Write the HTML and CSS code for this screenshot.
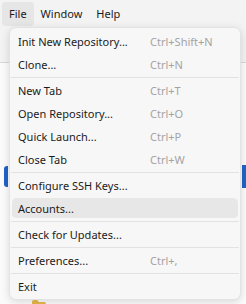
FILE: index.html
```html
<!DOCTYPE html>
<html>
<head>
<meta charset="utf-8">
<link rel="stylesheet" href="styles.css">
</head>
<body>
<div class="app">
  <div class="menubar">
    <span class="mb-item active">File</span>
    <span class="mb-item">Window</span>
    <span class="mb-item">Help</span>
  </div>
  <div class="toolbar"></div>
  <div class="content">
    <div class="sel-left"></div>
    <div class="sel-right"></div>
    <svg class="folder" width="14" height="10" viewBox="0 0 14 10"><path d="M0 2 Q0 0 2 0 H5 L7 2 H12 Q14 2 14 4 V10 H0 Z" fill="#e8b84a"/></svg>
  </div>
  <div class="menu">
    <div class="item"><span class="label">Init New Repository...</span><span class="key">Ctrl+Shift+N</span></div>
    <div class="item"><span class="label">Clone...</span><span class="key">Ctrl+N</span></div>
    <div class="sep"></div>
    <div class="item"><span class="label">New Tab</span><span class="key">Ctrl+T</span></div>
    <div class="item"><span class="label">Open Repository...</span><span class="key">Ctrl+O</span></div>
    <div class="item"><span class="label">Quick Launch...</span><span class="key">Ctrl+P</span></div>
    <div class="item"><span class="label">Close Tab</span><span class="key">Ctrl+W</span></div>
    <div class="sep"></div>
    <div class="item"><span class="label">Configure SSH Keys...</span><span class="key"></span></div>
    <div class="item hover"><span class="label">Accounts...</span><span class="key"></span></div>
    <div class="sep"></div>
    <div class="item"><span class="label">Check for Updates...</span><span class="key"></span></div>
    <div class="sep"></div>
    <div class="item"><span class="label">Preferences...</span><span class="key">Ctrl+,</span></div>
    <div class="sep"></div>
    <div class="item"><span class="label">Exit</span><span class="key"></span></div>
  </div>
</div>
</body>
</html>
```
FILE: styles.css
```css
html, body { margin: 0; padding: 0; }
body {
  width: 246px; height: 304px; overflow: hidden;
  font-family: "Noto Sans", "Open Sans", sans-serif;
  font-size: 11px;
  color: #1b1b1b;
  background: #ffffff;
}
.app { position: relative; width: 246px; height: 304px; }
.menubar {
  height: 28px;
  background: #f3f3f3;
  display: flex;
  align-items: flex-start;
  padding: 2px 0 0 2px;
  box-sizing: border-box;
}
.mb-item {
  height: 24px; line-height: 24px;
  padding: 0 7px;
  border-radius: 4px;
}
.mb-item.active { background: #e6e6e6; }
.toolbar {
  height: 34px;
  background: #f3f3f3;
  border-bottom: 1px solid #d9d9d9;
}
.content { position: relative; height: 241px; background: #fbfbfb; }
.sel-left {
  position: absolute; left: 4px; top: 103px; width: 4px; height: 21px;
  background: #1f63c6; border-radius: 3px 0 0 3px;
}
.sel-right {
  position: absolute; right: 0; top: 102px; width: 4px; height: 23px;
  background: #1f63c6;
}
.folder { position: absolute; left: 32px; top: 237px; }
.menu {
  position: absolute; left: 9px; top: 27px; width: 232px;
  box-sizing: border-box;
  background: #f7f7f7;
  border: 1px solid #e3e3e3;
  border-radius: 7px;
  box-shadow: 0 2px 8px rgba(0,0,0,0.14);
  padding: 2px 2px 1px;
}
.item {
  height: 23px;
  box-sizing: border-box;
  display: flex; align-items: center;
  padding: 0 6px;
  border-top: 1px solid transparent;
  border-bottom: 2px solid transparent;
  background-clip: padding-box;
  border-radius: 5px;
}
.item.hover { background-color: #e7e7e7; }
.label { width: 132px; }
.key { color: #a3a3a3; }
.sep { height: 1px; background: #e2e2e2; margin: 1px -1px; }
```
